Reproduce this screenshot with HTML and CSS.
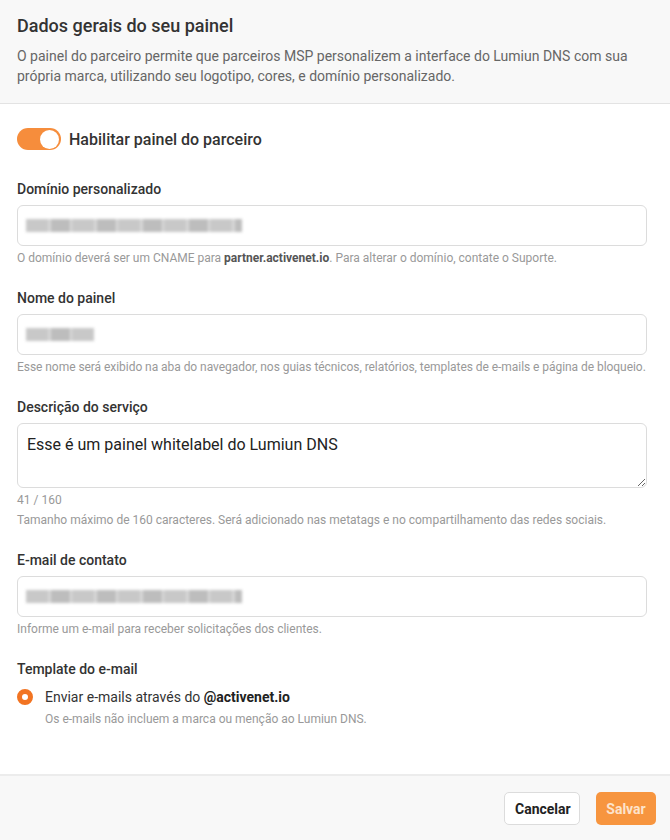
FILE: index.html
```html
<!DOCTYPE html>
<html lang="pt-BR">
<head>
    <meta charset="UTF-8">
    <meta name="viewport" content="width=device-width, initial-scale=1.0">
    <title>Dados gerais do seu painel</title>
    <link rel="stylesheet" href="styles.css">
</head>
<body>

<div class="panel">
    <div class="panel-header">
        <h1>Dados gerais do seu painel</h1>
        <p>O painel do parceiro permite que parceiros MSP personalizem a interface do Lumiun DNS com sua própria marca, utilizando seu logotipo, cores, e domínio personalizado.</p>
    </div>

    <div class="panel-body">
        <label class="switch-row">
            <span class="switch"><span class="knob"></span></span>
            <span class="switch-label">Habilitar painel do parceiro</span>
        </label>

        <div class="field">
            <div class="field-label">Domínio personalizado</div>
            <div class="input"><span class="masked masked-long"></span></div>
            <div class="hint">O domínio deverá ser um CNAME para <b>partner.activenet.io</b>. Para alterar o domínio, contate o Suporte.</div>
        </div>

        <div class="field">
            <div class="field-label">Nome do painel</div>
            <div class="input"><span class="masked masked-short"></span></div>
            <div class="hint tight">Esse nome será exibido na aba do navegador, nos guias técnicos, relatórios, templates de e-mails e página de bloqueio.</div>
        </div>

        <div class="field">
            <div class="field-label">Descrição do serviço</div>
            <textarea class="textarea">Esse é um painel whitelabel do Lumiun DNS</textarea>
            <div class="hint">41 / 160</div>
            <div class="hint">Tamanho máximo de 160 caracteres. Será adicionado nas metatags e no compartilhamento das redes sociais.</div>
        </div>

        <div class="field">
            <div class="field-label">E-mail de contato</div>
            <div class="input"><span class="masked masked-long"></span></div>
            <div class="hint">Informe um e-mail para receber solicitações dos clientes.</div>
        </div>

        <div class="field">
            <div class="field-label">Template do e-mail</div>
            <label class="radio-row">
                <span class="radio"></span>
                <span>Enviar e-mails através do <b>@activenet.io</b></span>
            </label>
            <div class="hint indent">Os e-mails não incluem a marca ou menção ao Lumiun DNS.</div>
        </div>
    </div>

    <div class="panel-footer">
        <button class="btn btn-light">Cancelar</button>
        <button class="btn btn-primary">Salvar</button>
    </div>
</div>

</body>
</html>
```

FILE: styles.css
```css
body {
    font-family: Roboto, "Liberation Sans", Arial, sans-serif;
    margin: 0;
    padding: 0;
    background: #fff;
    color: #333;
}
.panel {
    width: 670px;
    height: 840px;
    display: flex;
    flex-direction: column;
}
.panel-header {
    background: #f8f8f8;
    border-bottom: 1px solid #e3e3e3;
    padding: 14px 23px 17px 17px;
}
.panel-header h1 {
    font-size: 18px;
    font-weight: 500;
    line-height: 24px;
    margin: 0 0 8px;
    color: #333;
}
.panel-header p {
    font-size: 14px;
    line-height: 20px;
    margin: 0;
    color: #666;
}
.panel-body {
    flex: 1;
    padding: 24px 23px 0 17px;
}
.switch-row {
    display: flex;
    align-items: center;
    gap: 8px;
    margin-bottom: 29px;
}
.switch {
    width: 44px;
    height: 22px;
    border-radius: 11px;
    background: #f68d3c;
    display: flex;
    justify-content: flex-end;
    align-items: center;
    padding: 0 2px;
    box-sizing: border-box;
}
.knob {
    width: 19px;
    height: 19px;
    border-radius: 50%;
    background: #fff;
}
.switch-label {
    font-size: 16px;
    font-weight: 500;
    color: #333;
}
.field {
    margin-bottom: 22px;
}
.field-label {
    font-size: 14px;
    font-weight: 500;
    line-height: 20px;
    margin-bottom: 6px;
    color: #333;
}
.input {
    height: 41px;
    border: 1px solid #dcdcdc;
    border-radius: 6px;
    box-sizing: border-box;
    display: flex;
    align-items: center;
    padding: 0 8px;
}
/* dados ocultos (borrados) */
.masked {
    display: block;
    height: 13px;
    filter: blur(1.5px);
    background: repeating-linear-gradient(90deg, #c8c8c8 0 22px, #d8d8d8 22px 25px, #bdbdbd 25px 44px, #dcdcdc 44px 46px);
}
.masked-long {
    width: 216px;
}
.masked-short {
    width: 68px;
}
.textarea {
    display: block;
    width: 100%;
    height: 65px;
    box-sizing: border-box;
    border: 1px solid #dcdcdc;
    border-radius: 6px;
    padding: 10px 9px;
    font-family: inherit;
    font-size: 16px;
    line-height: 22px;
    color: #222;
    resize: vertical;
}
.hint {
    font-size: 12px;
    line-height: 16px;
    color: #999;
    margin-top: 4px;
    white-space: nowrap;
}
.hint.tight {
    letter-spacing: -0.05px;
}
.hint b {
    color: #555;
    font-weight: 700;
}
.hint.indent {
    padding-left: 28px;
}
.radio-row {
    display: flex;
    align-items: center;
    gap: 12px;
    font-size: 14px;
    line-height: 20px;
    margin-top: 8px;
    color: #333;
}
.radio-row b {
    color: #222;
}
.radio {
    width: 16px;
    height: 16px;
    border-radius: 50%;
    border: 5px solid #f27422;
    box-sizing: border-box;
    background: #fff;
}
.panel-footer {
    background: #f8f8f8;
    border-top: 2px solid #ececec;
    display: flex;
    justify-content: flex-end;
    gap: 16px;
    padding: 16px 14px 15px;
}
.btn {
    height: 33px;
    border-radius: 5px;
    font-family: inherit;
    font-size: 14px;
    font-weight: 700;
    padding: 0 10px;
    cursor: pointer;
}
.btn-light {
    background: #fff;
    border: 1px solid #dcdcdc;
    color: #222;
    width: 76px;
}
.btn-primary {
    background: #f7953f;
    border: none;
    color: #fde3cb;
    width: 60px;
}
```
